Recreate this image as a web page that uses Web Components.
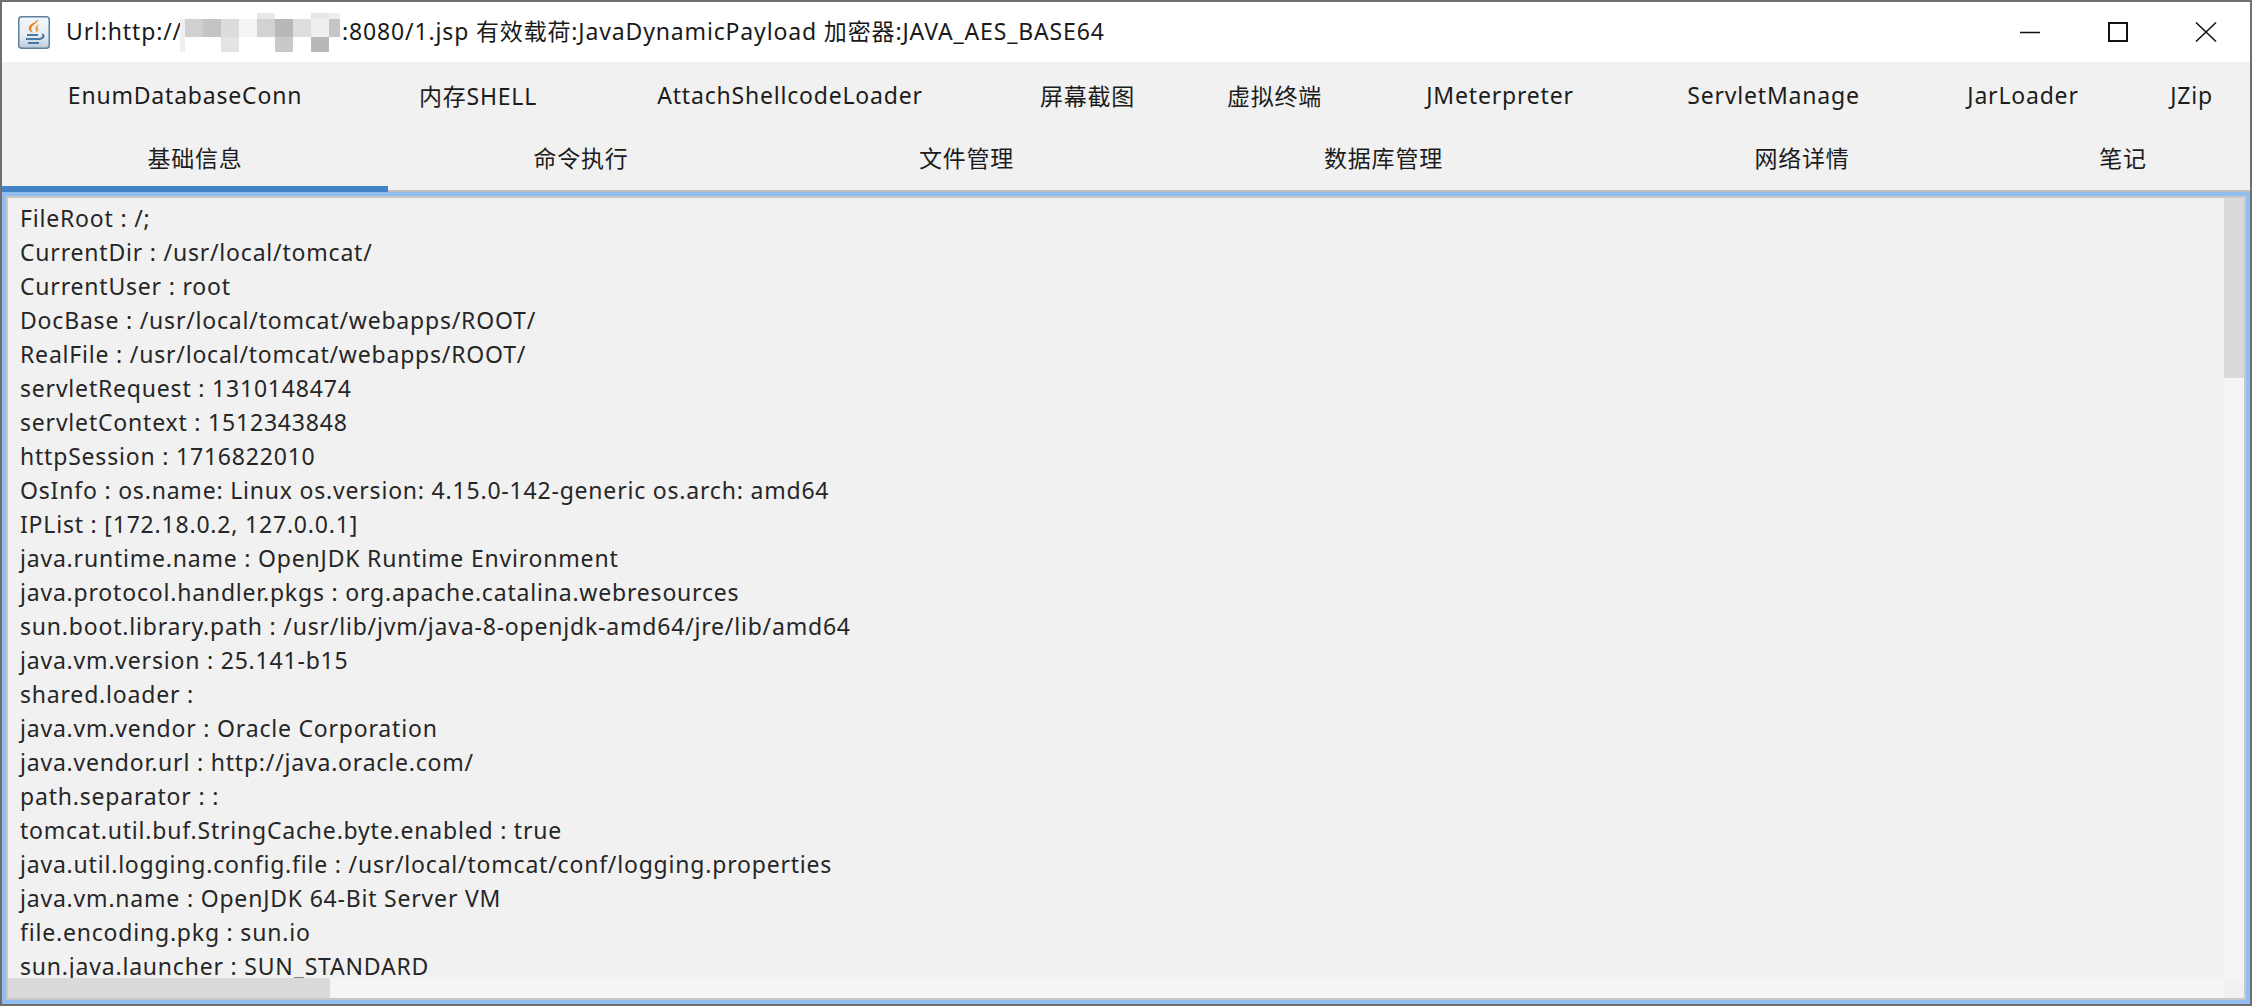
<!DOCTYPE html>
<html lang="zh">
<head>
<meta charset="utf-8">
<title>JavaDynamicPayload</title>
<style>
  html, body { margin: 0; height: 100%; overflow: hidden; background: #f1f1f1; }
  body { font-family: "Noto Sans", "Noto Sans CJK SC", sans-serif; color: #262626; }
</style>
</head>
<body>
<shell-window>
  <title-bar slot="title">Url:http://<pixel-mask></pixel-mask>:8080/1.jsp 有效载荷:JavaDynamicPayload 加密器:JAVA_AES_BASE64</title-bar>
  <tab-row slot="tabs" columns="366px 220px 404px 191px 183px 268px 279px 220px 117px">
    <tab-item>EnumDatabaseConn</tab-item>
    <tab-item>内存SHELL</tab-item>
    <tab-item>AttachShellcodeLoader</tab-item>
    <tab-item>屏幕截图</tab-item>
    <tab-item>虚拟终端</tab-item>
    <tab-item>JMeterpreter</tab-item>
    <tab-item>ServletManage</tab-item>
    <tab-item>JarLoader</tab-item>
    <tab-item>JZip</tab-item>
  </tab-row>
  <tab-row slot="tabs" last columns="386px 386px 385px 449px 388px 254px">
    <tab-item selected>基础信息</tab-item>
    <tab-item>命令执行</tab-item>
    <tab-item>文件管理</tab-item>
    <tab-item>数据库管理</tab-item>
    <tab-item>网络详情</tab-item>
    <tab-item>笔记</tab-item>
  </tab-row>
  <info-pane slot="body">
    <div>FileRoot : /;</div>
    <div>CurrentDir : /usr/local/tomcat/</div>
    <div>CurrentUser : root</div>
    <div>DocBase : /usr/local/tomcat/webapps/ROOT/</div>
    <div>RealFile : /usr/local/tomcat/webapps/ROOT/</div>
    <div>servletRequest : 1310148474</div>
    <div>servletContext : 1512343848</div>
    <div>httpSession : 1716822010</div>
    <div>OsInfo : os.name: Linux os.version: 4.15.0-142-generic os.arch: amd64</div>
    <div>IPList : [172.18.0.2, 127.0.0.1]</div>
    <div>java.runtime.name : OpenJDK Runtime Environment</div>
    <div>java.protocol.handler.pkgs : org.apache.catalina.webresources</div>
    <div>sun.boot.library.path : /usr/lib/jvm/java-8-openjdk-amd64/jre/lib/amd64</div>
    <div>java.vm.version : 25.141-b15</div>
    <div>shared.loader :</div>
    <div>java.vm.vendor : Oracle Corporation</div>
    <div>java.vendor.url : http://java.oracle.com/</div>
    <div>path.separator : :</div>
    <div>tomcat.util.buf.StringCache.byte.enabled : true</div>
    <div>java.util.logging.config.file : /usr/local/tomcat/conf/logging.properties</div>
    <div>java.vm.name : OpenJDK 64-Bit Server VM</div>
    <div>file.encoding.pkg : sun.io</div>
    <div>sun.java.launcher : SUN_STANDARD</div>
  </info-pane>
</shell-window>

<script>
class ShellWindow extends HTMLElement {
  constructor() {
    super();
    this.attachShadow({ mode: 'open' });
  }

  connectedCallback() {
    this.shadowRoot.innerHTML = `
      <style>
        :host {
          display: flex;
          flex-direction: column;
          box-sizing: border-box;
          width: 2252px;
          height: 1006px;
          border: 2px solid #6f6f6f;
          background: #f1f1f1;
        }
        .frame {
          flex: 1;
          min-height: 0;
          display: flex;
          box-sizing: border-box;
          border: 4px solid #93bdf0;
        }
      </style>
      <slot name="title"></slot>
      <slot name="tabs"></slot>
      <div class="frame"><slot name="body"></slot></div>
    `;
  }
}

class TitleBar extends HTMLElement {
  constructor() {
    super();
    this.attachShadow({ mode: 'open' });
  }

  connectedCallback() {
    this.shadowRoot.innerHTML = `
      <style>
        :host {
          display: flex;
          align-items: center;
          height: 60px;
          background: #fff;
          font-size: 23px;
          letter-spacing: 0.85px;
          color: #1a1a1a;
        }
        .icon { margin-left: 16px; margin-right: 16px; flex: none; display: block; }
        .text { flex: 1; white-space: nowrap; }
        .btns { display: flex; flex: none; }
        .btn { width: 88px; height: 60px; display: flex; align-items: center; justify-content: center; }
      </style>
      <svg class="icon" width="32" height="33" viewBox="0 0 32 33">
        <defs>
          <linearGradient id="bg" x1="0" y1="0" x2="0" y2="1">
            <stop offset="0" stop-color="#f4f7fa"/>
            <stop offset="0.6" stop-color="#e6edf3"/>
            <stop offset="1" stop-color="#b9cbd9"/>
          </linearGradient>
        </defs>
        <rect x="0.75" y="0.75" width="30.5" height="31.5" rx="3" fill="url(#bg)" stroke="#5f7f9b" stroke-width="1.5"/>
        <path d="M20 3c1 3-5 5.500-6.500 8.500-.8 1.800.2 3.800 1.500 5.500-3.500-1.500-5-4-3.800-6.500C12.500 7.500 19 6 20 3z" fill="#e8821e"/>
        <path d="M21 7.500c-1.500 1.800-4 3-3.600 5.500.2 1.500 1 2.500 1.200 3.500 1.600-1.300 1.900-2.800 1.300-4.500-.4-1.300.4-2.700 1.100-4.500z" fill="#f0a040"/>
        <path d="M9 19h11M24 18.500c2.500 0 2.500 3.500-2.500 4.500M8 23h14M10 27h11" fill="none" stroke="#4b7aa6" stroke-width="2"/>
      </svg>
      <div class="text"><slot></slot></div>
      <div class="btns">
        <div class="btn">
          <svg width="20" height="20" viewBox="0 0 20 20"><path d="M0 10.500h20" stroke="#111" stroke-width="1.500"/></svg>
        </div>
        <div class="btn">
          <svg width="20" height="20" viewBox="0 0 20 20"><rect x="1" y="1" width="18" height="18" fill="none" stroke="#111" stroke-width="2"/></svg>
        </div>
        <div class="btn">
          <svg width="22" height="20" viewBox="0 0 22 20"><path d="M1 0.500L21 19.500M21 0.500L1 19.500" stroke="#111" stroke-width="1.500" fill="none"/></svg>
        </div>
      </div>
    `;
  }
}

// the blurred-out host in the title: 3 rows of grey squares
const MASK_CELLS = [
  [null, null, null, null, null, '#e8e8e8', null, null, '#e6e6e6', '#eeeeee'],
  ['#f0f0f0', '#d0d0d0', '#c4c4c4', '#dcdcdc', '#f4f4f4', '#d2d2d2', '#b8b8b8', '#dedede', '#efefef', '#c6c6c6'],
  ['#f0f0f0', null, null, '#e4e4e4', null, null, '#c9c9c9', null, '#b8b8b8', null],
];

class PixelMask extends HTMLElement {
  constructor() {
    super();
    this.attachShadow({ mode: 'open' });
  }

  connectedCallback() {
    const cells = MASK_CELLS.flat()
      .map((c) => `<i style="background:${c || 'transparent'}"></i>`)
      .join('');
    this.shadowRoot.innerHTML = `
      <style>
        :host {
          display: inline-block;
          width: 162px;
          height: 39px;
          margin-left: -2px;
          overflow: hidden;
          vertical-align: -12px;
        }
        .grid {
          display: grid;
          grid-template-columns: 5px repeat(8, 18px) 11px;
          grid-template-rows: 6px 18px 15px;
        }
      </style>
      <div class="grid">${cells}</div>
    `;
  }
}

class TabRow extends HTMLElement {
  constructor() {
    super();
    this.attachShadow({ mode: 'open' });
  }

  connectedCallback() {
    this.shadowRoot.innerHTML = `
      <style>
        :host {
          display: grid;
          height: 66px;
          padding-bottom: 1px;
          box-sizing: border-box;
          grid-template-columns: ${this.getAttribute('columns')};
        }
        :host([last]) {
          height: 64px;
          padding-bottom: 0;
          border-bottom: 2px solid #bfbfbf;
        }
      </style>
      <slot></slot>
    `;
  }
}

class TabItem extends HTMLElement {
  constructor() {
    super();
    this.attachShadow({ mode: 'open' });
  }

  connectedCallback() {
    this.shadowRoot.innerHTML = `
      <style>
        :host {
          display: flex;
          align-items: center;
          justify-content: center;
          position: relative;
          font-size: 23px;
          letter-spacing: 0.8px;
          color: #1c1c1c;
          white-space: nowrap;
        }
        :host-context([last]) { padding-bottom: 5px; box-sizing: border-box; }
        :host([selected])::after {
          content: "";
          position: absolute;
          left: 0;
          right: 0;
          bottom: -2px;
          height: 6px;
          background: #4283c8;
        }
      </style>
      <slot></slot>
    `;
  }
}

class InfoPane extends HTMLElement {
  constructor() {
    super();
    this.attachShadow({ mode: 'open' });
  }

  connectedCallback() {
    this.shadowRoot.innerHTML = `
      <style>
        :host {
          flex: 1;
          min-width: 0;
          display: grid;
          box-sizing: border-box;
          grid-template-columns: 1fr 20px;
          grid-template-rows: 1fr 20px;
          border: 2px solid #c8c8c8;
        }
        .text {
          overflow: hidden;
          padding: 3px 0 0 12px;
          font-size: 23px;
          letter-spacing: 0.8px;
          line-height: 34px;
          color: #262626;
          white-space: nowrap;
        }
        .v { background: #f5f5f5; }
        .v div { height: 180px; background: #dadada; }
        .h { background: #f5f5f5; }
        .h div { width: 322px; height: 100%; background: #dadada; }
        .corner { background: #f1f1f1; }
      </style>
      <div class="text"><slot></slot></div>
      <div class="v"><div></div></div>
      <div class="h"><div></div></div>
      <div class="corner"></div>
    `;
  }
}

customElements.define('shell-window', ShellWindow);
customElements.define('title-bar', TitleBar);
customElements.define('pixel-mask', PixelMask);
customElements.define('tab-row', TabRow);
customElements.define('tab-item', TabItem);
customElements.define('info-pane', InfoPane);
</script>
</body>
</html>
